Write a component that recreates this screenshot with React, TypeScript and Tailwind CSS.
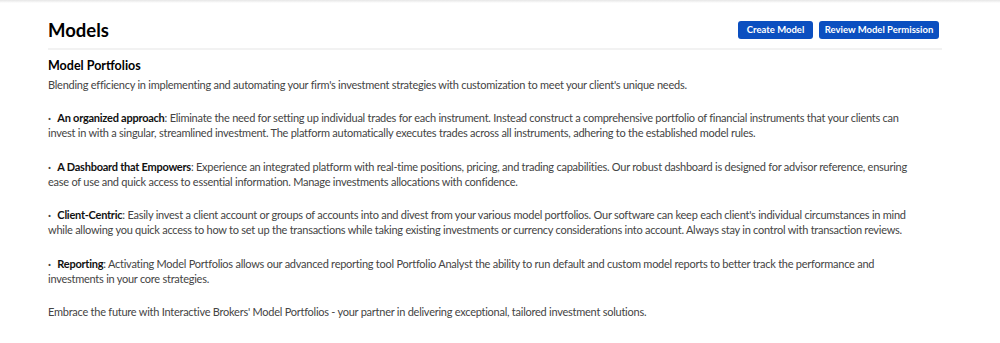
import React from 'react';

const bullets = [
  {
    title: 'An organized approach',
    text: 'Eliminate the need for setting up individual trades for each instrument. Instead construct a comprehensive portfolio of financial instruments that your clients can invest in with a singular, streamlined investment. The platform automatically executes trades across all instruments, adhering to the established model rules.',
  },
  {
    title: 'A Dashboard that Empowers',
    text: 'Experience an integrated platform with real-time positions, pricing, and trading capabilities. Our robust dashboard is designed for advisor reference, ensuring ease of use and quick access to essential information. Manage investments allocations with confidence.',
  },
  {
    title: 'Client-Centric',
    text: "Easily invest a client account or groups of accounts into and divest from your various model portfolios. Our software can keep each client's individual circumstances in mind while allowing you quick access to how to set up the transactions while taking existing investments or currency considerations into account. Always stay in control with transaction reviews.",
  },
  {
    title: 'Reporting',
    text: 'Activating Model Portfolios allows our advanced reporting tool Portfolio Analyst the ability to run default and custom model reports to better track the performance and investments in your core strategies.',
  },
];

export default function App() {
  return (
    <div className="min-h-[343px] bg-white font-['Lato',sans-serif] text-[#444]">
      <div className="h-[3px] bg-gradient-to-b from-[#e6e6e6] to-white" />
      <div className="ml-12 w-[894px]">
        {/* header */}
        <div className="flex items-center justify-between pt-[14px] pb-[5px] border-b-2 border-[#f2f2f2] pr-[3px]">
          <h1 className="text-[18.5px] font-bold text-black leading-[26px]">Models</h1>
          <div className="flex gap-[6px]">
            <button className="h-[18px] w-[75px] rounded-[3px] bg-[#0b4fc0] text-[9.5px] font-bold text-white leading-none">
              Create Model
            </button>
            <button className="h-[18px] w-[120px] rounded-[3px] bg-[#0b4fc0] text-[9.5px] font-bold text-white leading-none">
              Review Model Permission
            </button>
          </div>
        </div>

        <h2 className="mt-[7px] text-[12.5px] font-bold text-black leading-[18px]">Model Portfolios</h2>
        <p className="mt-[1.5px] text-[11px] leading-[15px] tracking-[-0.25px]">
          Blending efficiency in implementing and automating your firm's investment strategies with customization to meet your client's unique needs.
        </p>

        {bullets.map((b) => (
          <p key={b.title} className="mt-[18.5px] text-[11px] leading-[15px] tracking-[-0.25px] pr-[20px]">
            <span className="font-bold mr-[4px]">{'\u00B7'}</span>{' '}
            <span className="font-bold text-[#111]">{b.title}</span>: {b.text}
          </p>
        ))}

        <p className="mt-[18.5px] text-[11px] leading-[15px] tracking-[-0.25px]">
          Embrace the future with Interactive Brokers' Model Portfolios - your partner in delivering exceptional, tailored investment solutions.
        </p>
      </div>
    </div>
  );
}
